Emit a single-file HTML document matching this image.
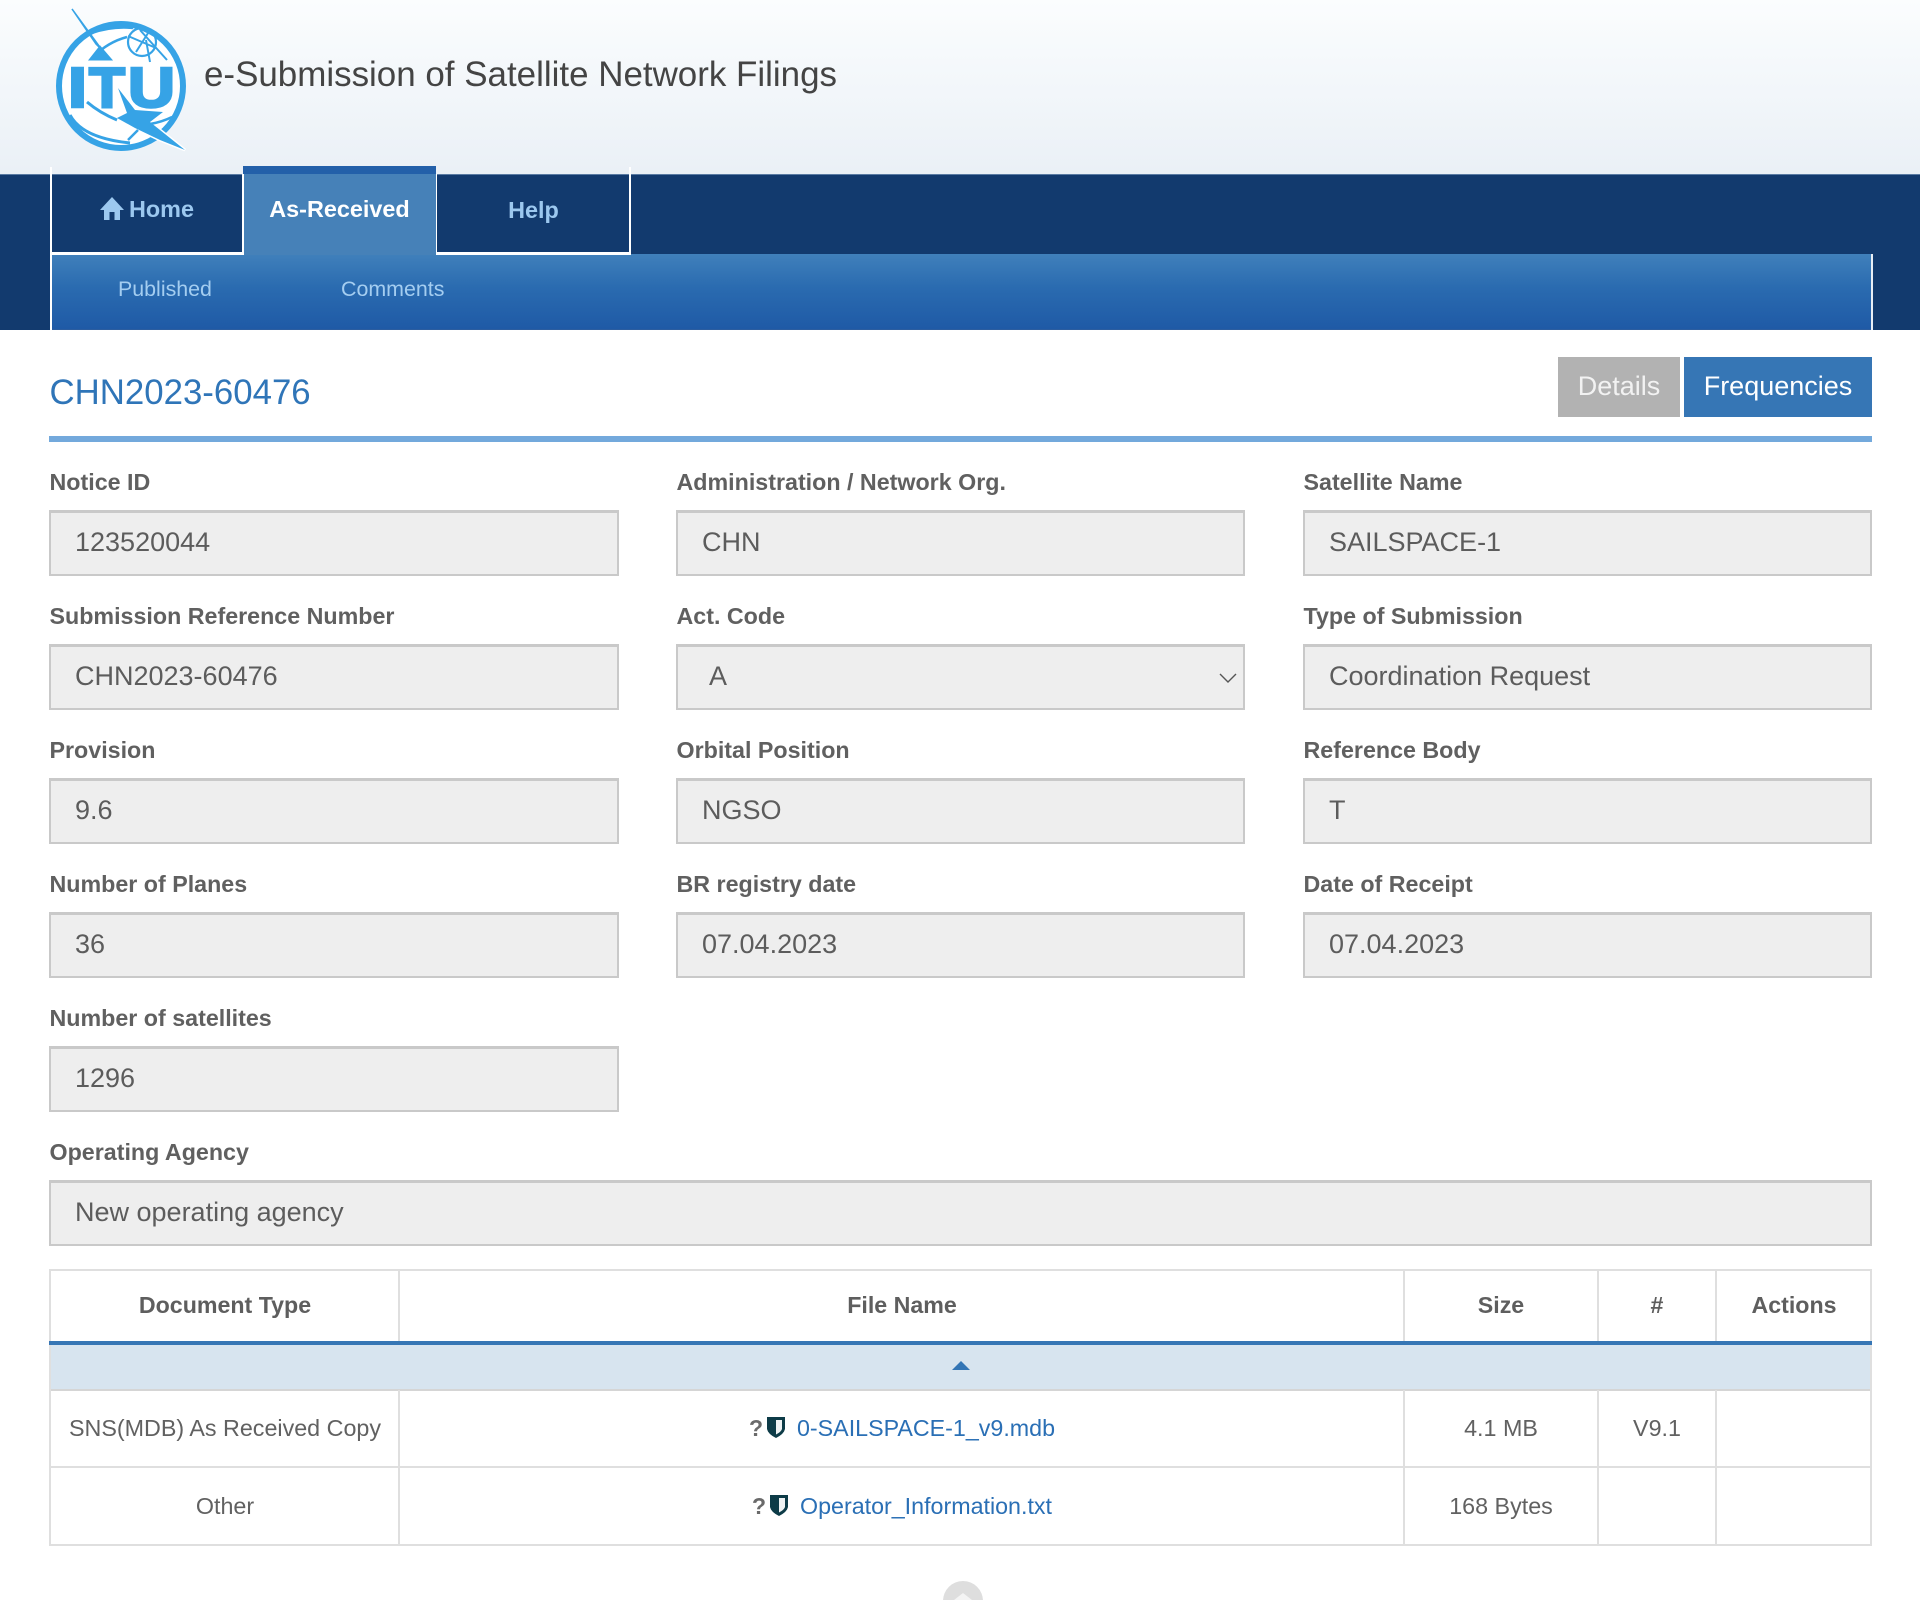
<!DOCTYPE html>
<html lang="en"><head><meta charset="utf-8"><title>e-Submission of Satellite Network Filings</title>
<style>
html,body{margin:0;padding:0;background:#fff}
body{position:relative;width:1920px;height:1600px;overflow:hidden;font-family:"Liberation Sans",Arial,sans-serif;color:#5f5f5f}
.a{position:absolute}
.t{position:absolute;white-space:nowrap}
.l{position:absolute;font-weight:bold;font-size:23.25px;line-height:30px;color:#606060;white-space:nowrap}
.i{position:absolute;box-sizing:border-box;height:65.5px;background:#eee;border:2px solid #c9c9c9;border-top-width:3px;font-size:27px;line-height:58px;padding-left:24px;color:#5c5c5c;white-space:nowrap}
.c{position:absolute;text-align:center;white-space:nowrap;font-size:23.3px;line-height:30px;color:#616161}
.h{font-weight:bold;color:#5e5e5e;font-size:23.2px}
.v{position:absolute;width:2px;background:#dfdfdf}
.hl{position:absolute;left:49px;width:1823px;background:#dfdfdf}
a{color:#2a6fb5;text-decoration:none}
</style></head><body>
<div class="a" style="left:0;top:0;width:1920px;height:174px;background:linear-gradient(#fbfdfe,#eaf0f6)"></div>
<svg class="a" style="left:50px;top:0" width="150" height="160" viewBox="50 0 150 160">
<circle cx="121" cy="86" r="62" fill="#fff" stroke="#36a3e6" stroke-width="6"/>
<g fill="none" stroke="#36a3e6">
<path d="M72 9 L102 50 L96 44 Z" fill="#36a3e6" stroke-width="1.5"/>
<path d="M89 60 H112 L100 46 Z" fill="#36a3e6" stroke-width="1"/>
<path d="M93 57 Q108 42 127 37" stroke-width="2.5"/>
<path d="M92 33 Q112 26 133 28" stroke-width="2.5"/>
<circle cx="142" cy="42" r="14" stroke-width="2.2"/>
<path d="M128 36 L156 48 M140 30 L167 60 M150 30 L136 52 M146 40 L150 62" stroke-width="2"/>
</g>
<g font-family="Liberation Sans" font-weight="bold" font-size="57" fill="#36a3e6" stroke="#36a3e6" stroke-width="2.6">
<text x="68" y="107" textLength="19" lengthAdjust="spacingAndGlyphs">I</text>
<text x="89" y="107" textLength="36" lengthAdjust="spacingAndGlyphs">T</text>
<text x="128" y="107" textLength="47" lengthAdjust="spacingAndGlyphs">U</text>
</g>
<path d="M118 88 L135 110 L163 112 L150 122 L185 150 L160 140 L135 128 L117 118 L127 113 Z" fill="#36a3e6" stroke="#fff" stroke-width="3" paint-order="stroke"/>
<g fill="none" stroke="#36a3e6">
<path d="M87 102 Q100 113 117 120" stroke-width="3"/>
<path d="M70 115 Q82 138 130 143" stroke-width="3"/>
<path d="M150 124 Q162 122 172 117" stroke-width="2.5"/>
<path d="M128 140 L138 130" stroke-width="2.5"/>
</g>
</svg>
<div class="t" style="left:204px;top:53px;font-size:34.95px;line-height:44px;color:#444">e-Submission of Satellite Network Filings</div>

<div class="a" style="left:0;top:174px;width:1920px;height:155.5px;background:#123a6e;border-top:1px solid #5a7ba3;box-sizing:border-box"></div>
<div class="a" style="left:50px;top:254px;width:1822px;height:75.5px;background:linear-gradient(#4080bb,#2a6bb0 45%,#1f5aa6);border-bottom:1px solid #2c5d9f;box-sizing:border-box"></div>
<div class="a" style="left:49.5px;top:167px;width:2px;height:162.5px;background:#fff"></div>
<div class="a" style="left:1870.5px;top:254px;width:2px;height:75.5px;background:#e8eef5"></div>
<div class="a" style="left:50px;top:252px;width:193px;height:3px;background:#fff"></div>
<div class="a" style="left:436px;top:252px;width:195px;height:3px;background:#fff"></div>
<div class="a" style="left:243px;top:166px;width:193px;height:89px;background:linear-gradient(#2360a9 0,#2360a9 8px,#4681b8 8px,#4681b8 100%)"></div>
<div class="a" style="left:242px;top:174px;width:1.5px;height:81px;background:#fff"></div>
<div class="a" style="left:435.5px;top:174px;width:1.5px;height:81px;background:#fff"></div>
<div class="a" style="left:629px;top:167px;width:2px;height:88px;background:#fff"></div>
<svg class="a" style="left:100px;top:197px" width="24" height="24" viewBox="0 0 24 24"><path d="M12 0 L24 13 H20 V23 H14.5 V15 H9.5 V23 H4 V13 H0 Z" fill="#9cc8ef"/></svg>
<div class="t" style="left:129px;top:194px;font-size:23.4px;line-height:30px;font-weight:bold;color:#9cc8ef">Home</div>
<div class="t" style="left:243px;width:193px;text-align:center;top:194px;font-size:23.4px;line-height:30px;font-weight:bold;color:#fff">As-Received</div>
<div class="t" style="left:436px;width:195px;text-align:center;top:195px;font-size:23.4px;line-height:30px;font-weight:bold;color:#9cc8ef">Help</div>
<div class="t" style="left:118px;top:274px;font-size:21.4px;line-height:30px;color:#a4cdf0">Published</div>
<div class="t" style="left:341px;top:274px;font-size:21.4px;line-height:30px;color:#a4cdf0">Comments</div>

<div class="t" style="left:49.5px;top:371px;font-size:34.8px;line-height:44px;color:#2f75b8">CHN2023-60476</div>
<div class="a" style="left:1558px;top:357px;width:122px;height:60px;background:#b2b2b2;color:#f2f2f2;font-size:27px;line-height:58px;text-align:center">Details</div>
<div class="a" style="left:1684px;top:357px;width:188px;height:60px;background:#3676b5;color:#fff;font-size:27px;line-height:58px;text-align:center">Frequencies</div>
<div class="a" style="left:49px;top:436px;width:1823px;height:6px;background:#73a9dc"></div>

<div class="l" style="left:49.5px;top:467px">Notice ID</div>
<div class="l" style="left:676.5px;top:467px">Administration / Network Org.</div>
<div class="l" style="left:1303.5px;top:467px">Satellite Name</div>
<div class="i" style="left:49px;top:510px;width:570px">123520044</div>
<div class="i" style="left:676px;top:510px;width:569px">CHN</div>
<div class="i" style="left:1303px;top:510px;width:569px">SAILSPACE-1</div>

<div class="l" style="left:49.5px;top:601px">Submission Reference Number</div>
<div class="l" style="left:676.5px;top:601px">Act. Code</div>
<div class="l" style="left:1303.5px;top:601px">Type of Submission</div>
<div class="i" style="left:49px;top:644px;width:570px">CHN2023-60476</div>
<div class="i" style="left:676px;top:644px;width:569px;padding-left:31px">A</div>
<svg class="a" style="left:1218px;top:672px" width="20" height="12" viewBox="0 0 20 12"><path d="M2 2 L10 10 L18 2" fill="none" stroke="#555" stroke-width="1.4"/></svg>
<div class="i" style="left:1303px;top:644px;width:569px">Coordination Request</div>

<div class="l" style="left:49.5px;top:735px">Provision</div>
<div class="l" style="left:676.5px;top:735px">Orbital Position</div>
<div class="l" style="left:1303.5px;top:735px">Reference Body</div>
<div class="i" style="left:49px;top:778px;width:570px">9.6</div>
<div class="i" style="left:676px;top:778px;width:569px">NGSO</div>
<div class="i" style="left:1303px;top:778px;width:569px">T</div>

<div class="l" style="left:49.5px;top:869px">Number of Planes</div>
<div class="l" style="left:676.5px;top:869px">BR registry date</div>
<div class="l" style="left:1303.5px;top:869px">Date of Receipt</div>
<div class="i" style="left:49px;top:912px;width:570px">36</div>
<div class="i" style="left:676px;top:912px;width:569px">07.04.2023</div>
<div class="i" style="left:1303px;top:912px;width:569px">07.04.2023</div>

<div class="l" style="left:49.5px;top:1003px">Number of satellites</div>
<div class="i" style="left:49px;top:1046px;width:570px">1296</div>
<div class="l" style="left:49.5px;top:1137px">Operating Agency</div>
<div class="i" style="left:49px;top:1180px;width:1823px">New operating agency</div>

<!-- table -->
<div class="a" style="left:49px;top:1345px;width:1823px;height:45px;background:#d7e4ef"></div>
<div class="hl" style="top:1269px;height:2px"></div>
<div class="a" style="left:49px;top:1341px;width:1823px;height:4px;background:#3676b5"></div>
<div class="hl" style="top:1389px;height:2px;background:#d5d5d5"></div>
<div class="hl" style="top:1466px;height:2px"></div>
<div class="hl" style="top:1544px;height:2px"></div>
<div class="v" style="left:49px;top:1269px;height:72px"></div><div class="v" style="left:49px;top:1345px;height:201px"></div>
<div class="v" style="left:398px;top:1269px;height:72px"></div><div class="v" style="left:398px;top:1390px;height:156px"></div>
<div class="v" style="left:1403px;top:1269px;height:72px"></div><div class="v" style="left:1403px;top:1390px;height:156px"></div>
<div class="v" style="left:1597px;top:1269px;height:72px"></div><div class="v" style="left:1597px;top:1390px;height:156px"></div>
<div class="v" style="left:1715px;top:1269px;height:72px"></div><div class="v" style="left:1715px;top:1390px;height:156px"></div>
<div class="v" style="left:1870px;top:1269px;height:72px"></div><div class="v" style="left:1870px;top:1345px;height:201px"></div>

<div class="c h" style="left:50px;width:350px;top:1290px">Document Type</div>
<div class="c h" style="left:400px;width:1004px;top:1290px">File Name</div>
<div class="c h" style="left:1404px;width:194px;top:1290px">Size</div>
<div class="c h" style="left:1598px;width:118px;top:1290px">#</div>
<div class="c h" style="left:1717px;width:154px;top:1290px">Actions</div>
<svg class="a" style="left:952px;top:1361px" width="18" height="9" viewBox="0 0 18 9"><path d="M9 0 L18 9 H0 Z" fill="#3375b5"/></svg>

<div class="c" style="left:50px;width:350px;top:1413px">SNS(MDB) As Received Copy</div>
<div class="c" style="left:1404px;width:194px;top:1413px">4.1 MB</div>
<div class="c" style="left:1598px;width:118px;top:1413px">V9.1</div>
<div class="c" style="left:50px;width:350px;top:1491px">Other</div>
<div class="c" style="left:1404px;width:194px;top:1491px">168 Bytes</div>

<div class="t" style="left:749px;top:1413px;font-size:23px;line-height:30px;font-weight:bold;color:#6a6a6a">?</div>
<svg class="a" style="left:767px;top:1417px" width="18" height="21" viewBox="0 0 18 21"><path d="M0 0 H18 V12 Q17 17 9 21 Q1 17 0 12 Z" fill="#0d3b47"/><path d="M9 3 H15 V12 Q14 15 9 17.5 Z" fill="#eef2f3"/></svg>
<a class="t" style="left:797px;top:1413px;font-size:23.25px;line-height:30px">0-SAILSPACE-1_v9.mdb</a>
<div class="t" style="left:752px;top:1491px;font-size:23px;line-height:30px;font-weight:bold;color:#6a6a6a">?</div>
<svg class="a" style="left:770px;top:1495px" width="18" height="21" viewBox="0 0 18 21"><path d="M0 0 H18 V12 Q17 17 9 21 Q1 17 0 12 Z" fill="#0d3b47"/><path d="M9 3 H15 V12 Q14 15 9 17.5 Z" fill="#eef2f3"/></svg>
<a class="t" style="left:800px;top:1491px;font-size:23.25px;line-height:30px">Operator_Information.txt</a>

<svg class="a" style="left:943px;top:1581px" width="40" height="19" viewBox="0 0 40 19"><circle cx="20" cy="20" r="20" fill="#dedede"/><path d="M20 12 L29 19 H11 Z" fill="#f4f4f4"/></svg>
</body></html>
